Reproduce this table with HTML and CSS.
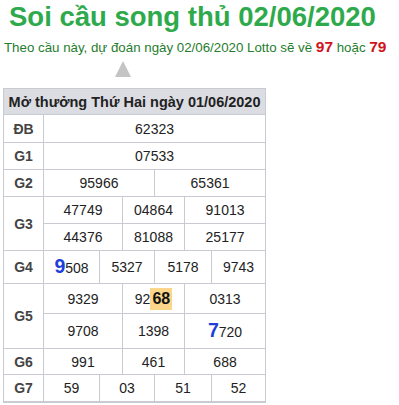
FILE: index.html
```html
<!DOCTYPE html>
<html lang="vi">
<head>
<meta charset="utf-8">
<title>Soi cầu song thủ 02/06/2020</title>
<link rel="stylesheet" href="styles.css">
</head>
<body>
<div class="page">
  <h1 class="title">Soi cầu song thủ 02/06/2020</h1>
  <p class="pred">Theo cầu này, dự đoán ngày 02/06/2020 Lotto sẽ về <b class="hot">97</b> hoặc <b class="hot">79</b></p>
  <div class="arrow"></div>
  <table class="kq">
    <colgroup>
      <col class="c-lbl"><col class="c1"><col class="c2"><col class="c3"><col class="c4"><col class="c5"><col class="c6">
    </colgroup>
    <tr class="h-head"><th colspan="7" class="head">Mở thưởng Thứ Hai ngày 01/06/2020</th></tr>
    <tr class="h-db"><td class="lbl">ĐB</td><td colspan="6">62323</td></tr>
    <tr class="h-27"><td class="lbl">G1</td><td colspan="6">07533</td></tr>
    <tr class="h-27"><td class="lbl">G2</td><td colspan="3">95966</td><td colspan="3">65361</td></tr>
    <tr class="h-27"><td class="lbl" rowspan="2">G3</td><td colspan="2">47749</td><td colspan="2">04864</td><td colspan="2">91013</td></tr>
    <tr class="h-27"><td colspan="2">44376</td><td colspan="2">81088</td><td colspan="2">25177</td></tr>
    <tr class="h-g4"><td class="lbl">G4</td><td><span class="big">9</span>508</td><td colspan="2">5327</td><td colspan="2">5178</td><td>9743</td></tr>
    <tr class="h-g5a"><td class="lbl" rowspan="2">G5</td><td colspan="2">9329</td><td colspan="2">92<span class="mark">68</span></td><td colspan="2">0313</td></tr>
    <tr class="h-g5b"><td colspan="2">9708</td><td colspan="2">1398</td><td colspan="2"><span class="big">7</span>720</td></tr>
    <tr class="h-26"><td class="lbl">G6</td><td colspan="2">991</td><td colspan="2">461</td><td colspan="2">688</td></tr>
    <tr class="h-27 last"><td class="lbl">G7</td><td>59</td><td colspan="2">03</td><td colspan="2">51</td><td>52</td></tr>
  </table>
</div>
</body>
</html>
```
FILE: styles.css
```css
html, body {
  margin: 0;
  padding: 0;
  background: #fff;
}
body {
  font-family: "Liberation Sans", Arial, sans-serif;
  color: #222;
}
.page {
  padding: 0 0 0 3px;
}
.title {
  margin: 0;
  padding: 1px 0 0 6px;
  font-size: 27.5px;
  line-height: 32px;
  font-weight: bold;
  color: #2eaa4c;
}
.pred {
  margin: 5px 0 0 1px;
  font-size: 13.3px;
  line-height: 20px;
  color: #1f7d2d;
}
.hot {
  font-size: 15.5px;
  line-height: 1;
  color: #d0121b;
}
.arrow {
  width: 0;
  height: 0;
  margin: 3px 0 0 112px;
  border-left: 8px solid transparent;
  border-right: 8px solid transparent;
  border-bottom: 16px solid #c4c4c4;
}
.kq {
  margin-top: 11px;
  border-collapse: collapse;
  table-layout: fixed;
  width: 262px;
  font-size: 14px;
  color: #222;
}
.kq td, .kq th {
  border: 1px solid #c9cbd3;
  padding: 0;
  text-align: center;
  vertical-align: middle;
  line-height: 16px;
}
.c-lbl { width: 40px; }
.c1 { width: 56px; }
.c2 { width: 23px; }
.c3 { width: 32px; }
.c4 { width: 30px; }
.c5 { width: 27px; }
.c6 { width: 54px; }
.head {
  background: #dcdde3;
  font-size: 14.5px;
  font-weight: bold;
  color: #222;
}
.lbl {
  font-weight: bold;
  color: #444;
}
.h-head { height: 26px; }
.h-db { height: 28px; }
.h-27 { height: 27px; }
.h-26 { height: 26px; }
.h-g4 { height: 33px; }
.h-g5a { height: 30px; }
.h-g5b { height: 35px; }
.last td { border-bottom: 2px solid #c9cbd3; }
.big {
  font-size: 19.5px;
  font-weight: bold;
  color: #1b3fd8;
}
.mark {
  display: inline-block;
  padding: 2px;
  font-size: 16px;
  line-height: 18px;
  font-weight: bold;
  color: #111;
  background: #fbd68a;
}
```
